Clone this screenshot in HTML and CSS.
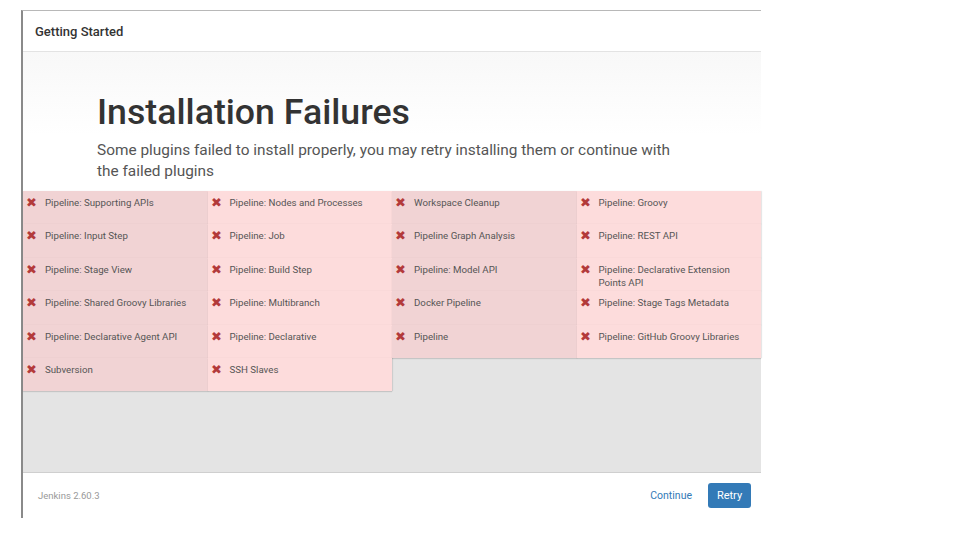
FILE: index.html
```html
<!DOCTYPE html>
<html>
<head>
<meta charset="utf-8">
<link rel="stylesheet" href="styles.css">
</head>
<body>
<div class="wizard">
  <div class="wizard-header">Getting Started</div>
  <div class="wizard-body">
    <div class="intro">
      <h1 class="title">Installation Failures</h1>
      <p class="lead">Some plugins failed to install properly, you may retry installing them or continue with the failed plugins</p>
    </div>
    <div class="plugins">
      <div class="plugin"><span class="x">✖</span><span class="name">Pipeline: Supporting APIs</span></div>
      <div class="plugin"><span class="x">✖</span><span class="name">Pipeline: Nodes and Processes</span></div>
      <div class="plugin"><span class="x">✖</span><span class="name">Workspace Cleanup</span></div>
      <div class="plugin"><span class="x">✖</span><span class="name">Pipeline: Groovy</span></div>
      <div class="plugin"><span class="x">✖</span><span class="name">Pipeline: Input Step</span></div>
      <div class="plugin"><span class="x">✖</span><span class="name">Pipeline: Job</span></div>
      <div class="plugin"><span class="x">✖</span><span class="name">Pipeline Graph Analysis</span></div>
      <div class="plugin"><span class="x">✖</span><span class="name">Pipeline: REST API</span></div>
      <div class="plugin"><span class="x">✖</span><span class="name">Pipeline: Stage View</span></div>
      <div class="plugin"><span class="x">✖</span><span class="name">Pipeline: Build Step</span></div>
      <div class="plugin"><span class="x">✖</span><span class="name">Pipeline: Model API</span></div>
      <div class="plugin"><span class="x">✖</span><span class="name">Pipeline: Declarative Extension Points API</span></div>
      <div class="plugin"><span class="x">✖</span><span class="name">Pipeline: Shared Groovy Libraries</span></div>
      <div class="plugin"><span class="x">✖</span><span class="name">Pipeline: Multibranch</span></div>
      <div class="plugin"><span class="x">✖</span><span class="name">Docker Pipeline</span></div>
      <div class="plugin"><span class="x">✖</span><span class="name">Pipeline: Stage Tags Metadata</span></div>
      <div class="plugin"><span class="x">✖</span><span class="name">Pipeline: Declarative Agent API</span></div>
      <div class="plugin"><span class="x">✖</span><span class="name">Pipeline: Declarative</span></div>
      <div class="plugin"><span class="x">✖</span><span class="name">Pipeline</span></div>
      <div class="plugin"><span class="x">✖</span><span class="name">Pipeline: GitHub Groovy Libraries</span></div>
      <div class="plugin"><span class="x">✖</span><span class="name">Subversion</span></div>
      <div class="plugin"><span class="x">✖</span><span class="name">SSH Slaves</span></div>
    </div>
  </div>
  <div class="wizard-footer">
    <span class="version">Jenkins 2.60.3</span>
    <div class="actions">
      <a class="link-btn">Continue</a>
      <a class="primary-btn">Retry</a>
    </div>
  </div>
</div>
</body>
</html>
```

FILE: styles.css
```css
html, body {
  margin: 0;
  padding: 0;
  background: #fff;
  font-family: Roboto, "Liberation Sans", sans-serif;
}

.wizard {
  margin: 10px 0 0 21px;
  width: 738px;
  height: 507px;
  border-top: 1px solid #b8b8b8;
  border-left: 2px solid #8a8a8a;
  display: flex;
  flex-direction: column;
  box-sizing: content-box;
}

.wizard-header {
  height: 40px;
  flex: none;
  display: flex;
  align-items: center;
  padding-left: 12px;
  font-size: 13px;
  font-weight: 500;
  color: #333;
  border-bottom: 1px solid #e3e3e3;
}

.wizard-body {
  flex: 1;
  background: #e4e4e4;
  display: flex;
  flex-direction: column;
}

.intro {
  height: 139px;
  flex: none;
  background: linear-gradient(#f8f8f8, #ffffff 60%);
  padding-left: 74px;
  box-sizing: border-box;
  padding-top: 39px;
}

.title {
  margin: 0;
  font-size: 35.7px;
  font-weight: 500;
  color: #333;
  line-height: 42px;
}

.lead {
  margin: 7px 0 0 0;
  font-size: 15.4px;
  line-height: 21px;
  color: #555;
  max-width: 590px;
}

.plugins {
  display: grid;
  grid-template-columns: repeat(4, 1fr);
  grid-auto-rows: 33.4px;
}

.plugin {
  display: flex;
  align-items: flex-start;
  padding: 5px 8px 0 3px;
  box-sizing: border-box;
  background: #fddcdc;
  box-shadow: 0 1px 1px rgba(0,0,0,0.12), 1px 0 1px rgba(0,0,0,0.08);
  font-size: 9.7px;
  line-height: 13px;
  color: #555;
}

.plugin:nth-child(odd) {
  background: #f1d3d4;
}

.x {
  color: #b33a3a;
  font-size: 13px;
  width: 19px;
  flex: none;
  line-height: 13px;
}

.wizard-footer {
  height: 46px;
  flex: none;
  border-top: 1px solid #cfcfcf;
  display: flex;
  align-items: center;
  justify-content: space-between;
  padding: 0 10px 0 15px;
  box-sizing: border-box;
}

.version {
  font-size: 9.5px;
  color: #999;
}

.actions {
  display: flex;
  align-items: center;
  gap: 16px;
}

.link-btn {
  font-size: 10.5px;
  color: #337ab7;
}

.primary-btn {
  display: inline-flex;
  align-items: center;
  justify-content: center;
  width: 43px;
  height: 25px;
  background: #337ab7;
  border-radius: 3px;
  color: #fff;
  font-size: 11px;
}
```
